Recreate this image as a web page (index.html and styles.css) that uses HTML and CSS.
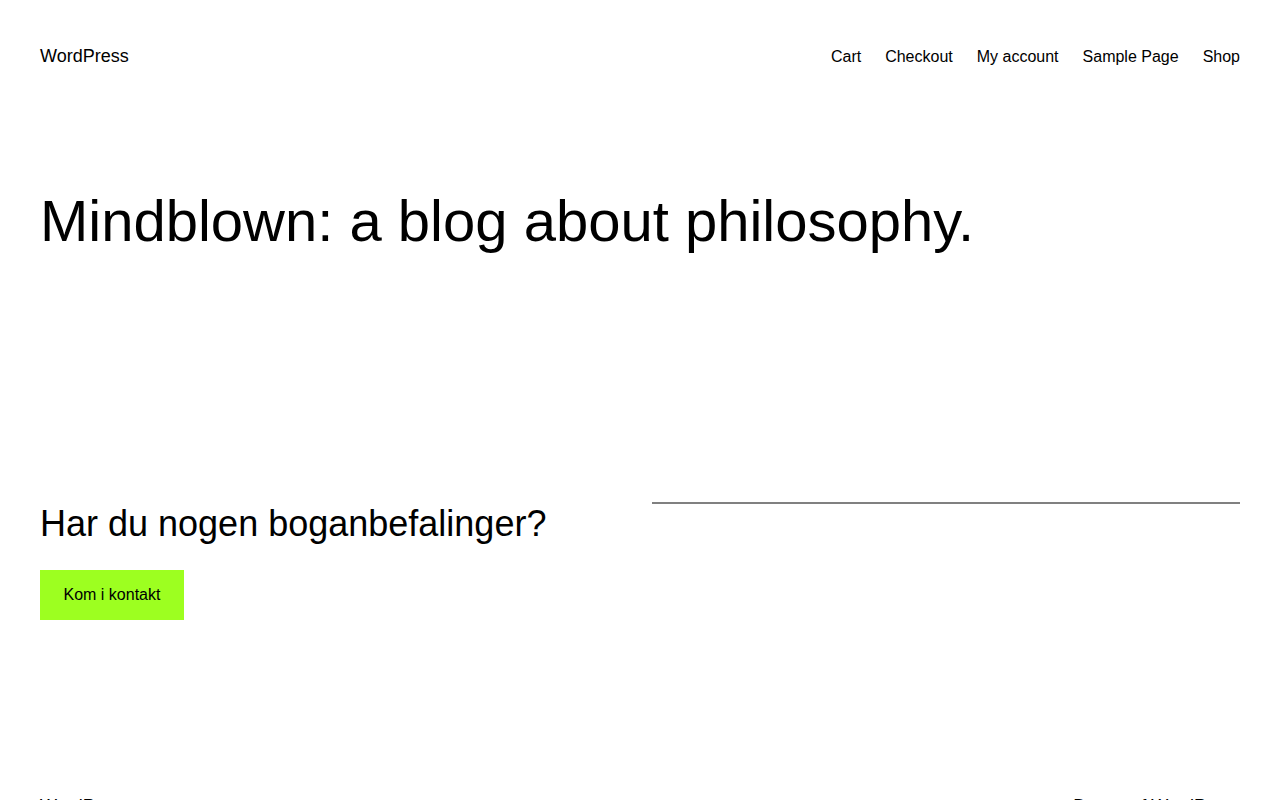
FILE: index.html
```html
<!DOCTYPE html>
<html lang="da">
<head>
<meta charset="utf-8">
<title>WordPress</title>
<link rel="stylesheet" href="styles.css">
</head>
<body>
<header class="site-header">
  <a class="site-title" href="#">WordPress</a>
  <nav class="site-nav">
    <a href="#">Cart</a>
    <a href="#">Checkout</a>
    <a href="#">My account</a>
    <a href="#">Sample Page</a>
    <a href="#">Shop</a>
  </nav>
</header>
<main class="site-main">
  <h1 class="hero-title">Mindblown: a blog about philosophy.</h1>
  <section class="cta">
    <div class="cta-col">
      <h2 class="cta-title">Har du nogen boganbefalinger?</h2>
      <a class="button" href="#">Kom i kontakt</a>
    </div>
    <div class="cta-col">
      <hr class="separator">
    </div>
  </section>
</main>
<footer class="site-footer">
  <a class="footer-title" href="#">WordPress</a>
  <p class="credit">Drevet af <a href="#">WordPress</a></p>
</footer>
</body>
</html>
```

FILE: styles.css
```css
html, body {
  margin: 0;
  padding: 0;
  background: #ffffff;
}

body {
  font-family: "Liberation Sans", Arial, sans-serif;
  color: #000000;
  padding: 0 40px;
}

a {
  color: inherit;
  text-decoration: none;
}

.site-header {
  display: flex;
  justify-content: space-between;
  align-items: baseline;
  padding-top: 42px;
}

.site-title {
  font-size: 18px;
  line-height: 28.8px;
}

.site-nav {
  display: flex;
  gap: 24px;
  font-size: 16px;
  line-height: 25.6px;
}

.site-main {
  margin-top: 115px;
}

.hero-title {
  margin: 0;
  font-weight: 400;
  font-size: 58px;
  line-height: 1.2;
}

.cta {
  margin-top: 247px;
  display: grid;
  grid-template-columns: 1fr 1fr;
  column-gap: 24px;
  align-items: start;
}

.cta-col {
  display: flex;
  flex-direction: column;
  align-items: flex-start;
}

.cta-title {
  margin: 0;
  font-weight: 400;
  font-size: 36px;
  line-height: 1.2;
}

.button {
  margin-top: 24px;
  background: #9dff20;
  color: #000000;
  font-size: 16px;
  line-height: 26px;
  padding: 12px 23.5px;
}

.separator {
  align-self: stretch;
  margin: 0;
  border: 0;
  border-top: 2px solid #808080;
  height: 0;
}

.site-footer {
  margin-top: 172px;
  display: flex;
  justify-content: space-between;
  align-items: baseline;
  font-size: 18px;
  line-height: 28.8px;
  padding-bottom: 40px;
}

.credit {
  margin: 0;
}
```
